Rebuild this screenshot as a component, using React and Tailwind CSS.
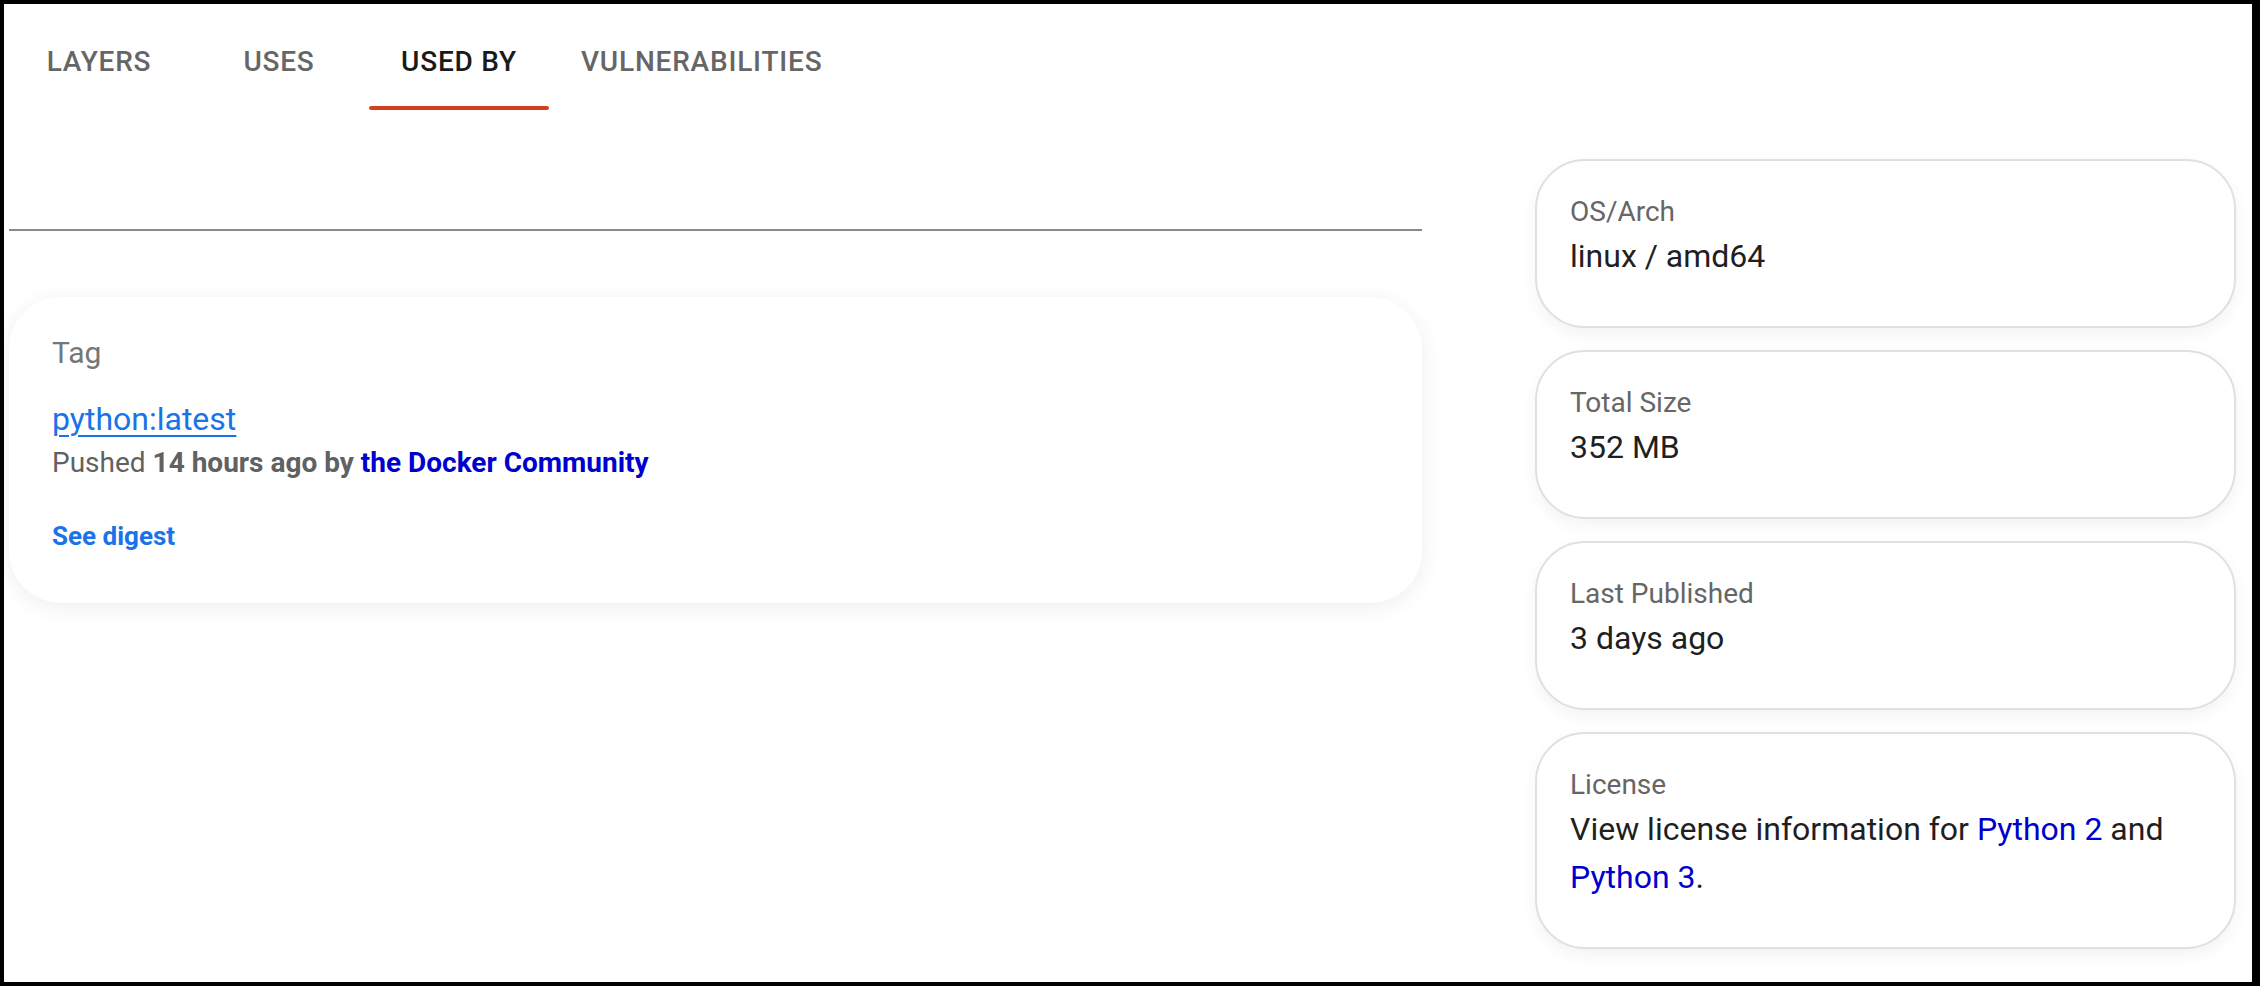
import React from 'react';

const tabs = ['LAYERS', 'USES', 'USED BY', 'VULNERABILITIES'];

const details = [
  { label: 'OS/Arch', value: 'linux / amd64' },
  { label: 'Total Size', value: '352 MB' },
  { label: 'Last Published', value: '3 days ago' },
];

function InfoCard({ label, children }) {
  return (
    <div className="rounded-[50px] border-2 border-[#e0e0e0] bg-white pl-[33px] pr-[33px] pt-[31px] pb-[46px] shadow-[0_6px_16px_rgba(0,0,0,0.05)]">
      <div className="text-[28px] leading-[40px] text-[#666666]">{label}</div>
      <div className="text-[32px] leading-[48px] text-[#1f1f1f]">{children}</div>
    </div>
  );
}

export default function App() {
  const active = 'USED BY';

  return (
    <div className="h-screen overflow-hidden border-t-4 border-l-4 border-b-4 border-r-8 border-black bg-white pl-[5px] pt-[10px] font-['Roboto','Liberation_Sans',sans-serif]">
      <div className="flex">
        {tabs.map((t) => (
          <div
            key={t}
            className={`relative flex h-[96px] min-w-[180px] items-center justify-center px-8 text-[28px] font-medium tracking-[0.8px] ${
              t === active ? 'text-[#1a1a1a]' : 'text-[#666666]'
            }`}
          >
            {t}
            {t === active && <span className="absolute bottom-0 left-0 right-0 h-1 rounded-sm bg-[#d4401c]" />}
          </div>
        ))}
      </div>

      <div className="flex gap-[113px] pr-[16px]">
        <div className="w-[1413px] shrink-0">
          <div className="mt-[119px] h-[2px] bg-[#8a8a8a]" />
          <div className="mt-[66px] rounded-[52px] bg-white pl-[43px] pt-[36px] pb-[49px] shadow-[0_4px_22px_rgba(0,0,0,0.07)]">
            <div className="text-[30px] leading-[40px] text-[#767676]">Tag</div>
            <a href="#" className="mt-[26px] block w-fit text-[32px] leading-[40px] text-[#1a73e8] underline decoration-2 underline-offset-[5px]">
              python:latest
            </a>
            <div className="mt-[4px] text-[28px] leading-[40px] text-[#616161]">
              Pushed <span className="font-bold">14 hours ago</span> <span className="font-bold">by</span>{' '}
              <a href="#" className="font-bold text-[#0000cc]">the Docker Community</a>
            </div>
            <a href="#" className="mt-[35px] block w-fit text-[26px] font-bold leading-[36px] text-[#1a73e8]">
              See digest
            </a>
          </div>
        </div>

        <div className="mt-[49px] flex w-[701px] shrink-0 flex-col gap-[22px]">
          {details.map((d) => (
            <InfoCard key={d.label} label={d.label}>
              {d.value}
            </InfoCard>
          ))}
          <InfoCard label="License">
            View license information for <a href="#" className="text-[#0000cc]">Python 2</a> and{' '}
            <a href="#" className="text-[#0000cc]">Python 3</a>.
          </InfoCard>
        </div>
      </div>
    </div>
  );
}
